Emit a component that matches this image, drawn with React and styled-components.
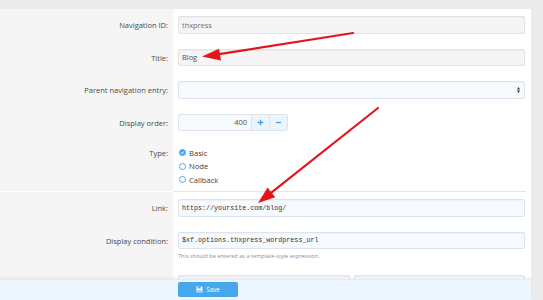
import styled, { createGlobalStyle } from "styled-components";

const GlobalStyle = createGlobalStyle`
  html, body {
    margin: 0;
    padding: 0;
    background: #ebebeb;
    overflow: hidden;
  }
  body {
    font-family: "Open Sans", "Noto Sans", sans-serif;
  }
`;

const Page = styled.div`
  position: relative;
  width: 543px;
  height: 300px;
  padding-top: 9px;
  box-sizing: border-box;
  overflow: hidden;
`;

const Panel = styled.div`
  width: 531px;
  background: #fff;
`;

const Row = styled.div`
  display: grid;
  grid-template-columns: 173px 1fr;
`;

const Label = styled.div`
  background: #f5f5f5;
  color: #4a4a4a;
  font-size: 7.5px;
  text-align: right;
  padding: ${(p) => p.$top || "11px"} 5px 0 0;
  line-height: 10px;
`;

const Control = styled.div`
  padding: ${(p) => p.$pad || "7px 6px 8px 5px"};
  display: flex;
  flex-direction: column;
`;

const Input = styled.div`
  flex: ${(p) => (p.$grow ? 1 : "none")};
  height: 17.5px;
  box-sizing: border-box;
  border: 1px solid ${(p) => (p.$grey ? "#e2e2e2" : "#dde4ec")};
  border-radius: 2px;
  background: ${(p) => (p.$grey ? "#f5f5f5" : "#f6f9fd")};
  color: ${(p) => p.$color || "#505050"};
  font-family: ${(p) =>
    p.$mono ? '"Liberation Mono", "DejaVu Sans Mono", monospace' : "inherit"};
  font-size: ${(p) => (p.$mono ? "6.7px" : "7.4px")};
  display: flex;
  align-items: center;
  justify-content: space-between;
  padding: 0 4px 0 3px;
  box-shadow: inset 0 1px 1px rgba(0, 0, 0, 0.03);
`;

const Spinner = styled.div`
  display: flex;
  width: 110px;
  height: 17.5px;
  box-sizing: border-box;
  border: 1px solid #dde4ec;
  border-radius: 2px;
  background: #f6f9fd;
  font-size: 7.4px;
  color: #505050;
`;

const SpinValue = styled.div`
  flex: 1;
  display: flex;
  align-items: center;
  justify-content: flex-end;
  padding-right: 4px;
`;

const SpinButton = styled.div`
  width: 17px;
  border-left: 1px solid #dde4ec;
  background: #eef4fb;
  display: flex;
  align-items: center;
  justify-content: center;
`;

const RadioList = styled.div`
  display: flex;
  flex-direction: column;
  padding-left: 1px;
`;

const RadioItem = styled.div`
  display: flex;
  align-items: center;
  gap: 3px;
  height: 13.5px;
  font-size: 7.6px;
  color: #3c3c3c;
`;

const Circle = styled.span`
  width: 7px;
  height: 7px;
  box-sizing: border-box;
  border-radius: 50%;
  border: 1.2px solid #47a7eb;
  background: ${(p) => (p.$on ? "#47a7eb" : "#fff")};
  display: flex;
  align-items: center;
  justify-content: center;
`;

const Divider = styled.div`
  height: 1px;
  background: #e6e6e6;
  margin-right: 5px;
`;

const Hint = styled.div`
  margin-top: 3px;
  font-size: 5.6px;
  line-height: 8px;
  color: #8e8e8e;
`;

const Pair = styled.div`
  display: flex;
  gap: 4px;
`;

const Footer = styled.div`
  position: absolute;
  left: 0;
  bottom: 0;
  width: 531px;
  height: 21px;
  background: #edf5fd;
  border-top: 1px solid #e3eaf1;
  box-shadow: 0 -2px 3px rgba(0, 0, 0, 0.04);
  box-sizing: border-box;
  padding: 2px 0 0 178px;
`;

const SaveButton = styled.button`
  width: 60px;
  height: 15px;
  border: 0;
  border-radius: 2px;
  background: #47a7eb;
  color: #fff;
  font-family: inherit;
  font-size: 6.2px;
  display: flex;
  align-items: center;
  justify-content: center;
  gap: 3px;
  padding: 0;
`;

const Arrows = styled.svg`
  position: absolute;
  left: 0;
  top: 0;
  pointer-events: none;
`;

const Check = () => (
  <svg width="5" height="5" viewBox="0 0 10 10">
    <path d="M2 5.2 L4.2 7.3 L8 2.8" fill="none" stroke="#fff" strokeWidth="2" />
  </svg>
);

const SelectArrows = () => (
  <svg width="3" height="6" viewBox="0 0 6 12">
    <path d="M3 0 L6 5 H0 Z M0 7 H6 L3 12 Z" fill="#333" />
  </svg>
);

const Plus = () => (
  <svg width="7" height="7" viewBox="0 0 10 10">
    <path d="M5 1 V9 M1 5 H9" stroke="#3f9de2" strokeWidth="1.8" />
  </svg>
);

const Minus = () => (
  <svg width="7" height="7" viewBox="0 0 10 10">
    <path d="M1.5 5 H8.5" stroke="#3f9de2" strokeWidth="1.8" />
  </svg>
);

const SaveIcon = () => (
  <svg width="7" height="7" viewBox="0 0 14 14">
    <path d="M1 1 H11 L13 3 V13 H1 Z" fill="#fff" />
    <rect x="3.5" y="1" width="6" height="4" fill="#47a7eb" />
    <rect x="3" y="8" width="8" height="5" fill="#47a7eb" />
    <rect x="4" y="9" width="6" height="1" fill="#fff" />
    <rect x="4" y="11" width="6" height="1" fill="#fff" />
  </svg>
);

const radios = [
  { label: "Basic", on: true },
  { label: "Node" },
  { label: "Callback" },
];

export default function App() {
  return (
    <Page>
      <GlobalStyle />
      <Panel>
        <Row>
          <Label>Navigation ID:</Label>
          <Control>
            <Input $grey $color="#6e6e6e">thxpress</Input>
          </Control>
        </Row>
        <Row>
          <Label>Title:</Label>
          <Control>
            <Input $grey>Blog</Input>
          </Control>
        </Row>
        <Row>
          <Label>Parent navigation entry:</Label>
          <Control>
            <Input>
              <span />
              <SelectArrows />
            </Input>
          </Control>
        </Row>
        <Row>
          <Label>Display order:</Label>
          <Control>
            <Spinner>
              <SpinValue>400</SpinValue>
              <SpinButton>
                <Plus />
              </SpinButton>
              <SpinButton>
                <Minus />
              </SpinButton>
            </Spinner>
          </Control>
        </Row>
        <Row>
          <Label $top="9px">Type:</Label>
          <Control $pad="7px 6px 4.5px 5px">
            <RadioList>
              {radios.map((r) => (
                <RadioItem key={r.label}>
                  <Circle $on={r.on}>{r.on && <Check />}</Circle>
                  {r.label}
                </RadioItem>
              ))}
            </RadioList>
          </Control>
        </Row>
        <Row>
          <div />
          <Divider />
        </Row>
        <Row>
          <Label>Link:</Label>
          <Control>
            <Input $mono $color="#333">https://yoursite.com/blog/</Input>
          </Control>
        </Row>
        <Row>
          <Label>Display condition:</Label>
          <Control>
            <Input $mono $color="#333">$xf.options.thxpress_wordpress_url</Input>
            <Hint>This should be entered as a template-style expression.</Hint>
          </Control>
        </Row>
        <Row>
          <Label />
          <Control>
            <Pair>
              <Input $grow />
              <Input $grow />
            </Pair>
          </Control>
        </Row>
      </Panel>

      <Footer>
        <SaveButton>
          <SaveIcon />
          Save
        </SaveButton>
      </Footer>

      <Arrows width="543" height="300" viewBox="0 0 543 300">
        <g fill="#e3161b" stroke="#e3161b">
          <line x1="353" y1="33" x2="216" y2="54.6" strokeWidth="2.2" strokeLinecap="round" />
          <polygon points="202,56.5 219,48.8 221,60.4" stroke="none" />
          <line x1="378" y1="108" x2="271" y2="192.8" strokeWidth="2.2" strokeLinecap="round" />
          <polygon points="258,203 267.6,187.6 275.2,197.2" stroke="none" />
        </g>
      </Arrows>
    </Page>
  );
}
